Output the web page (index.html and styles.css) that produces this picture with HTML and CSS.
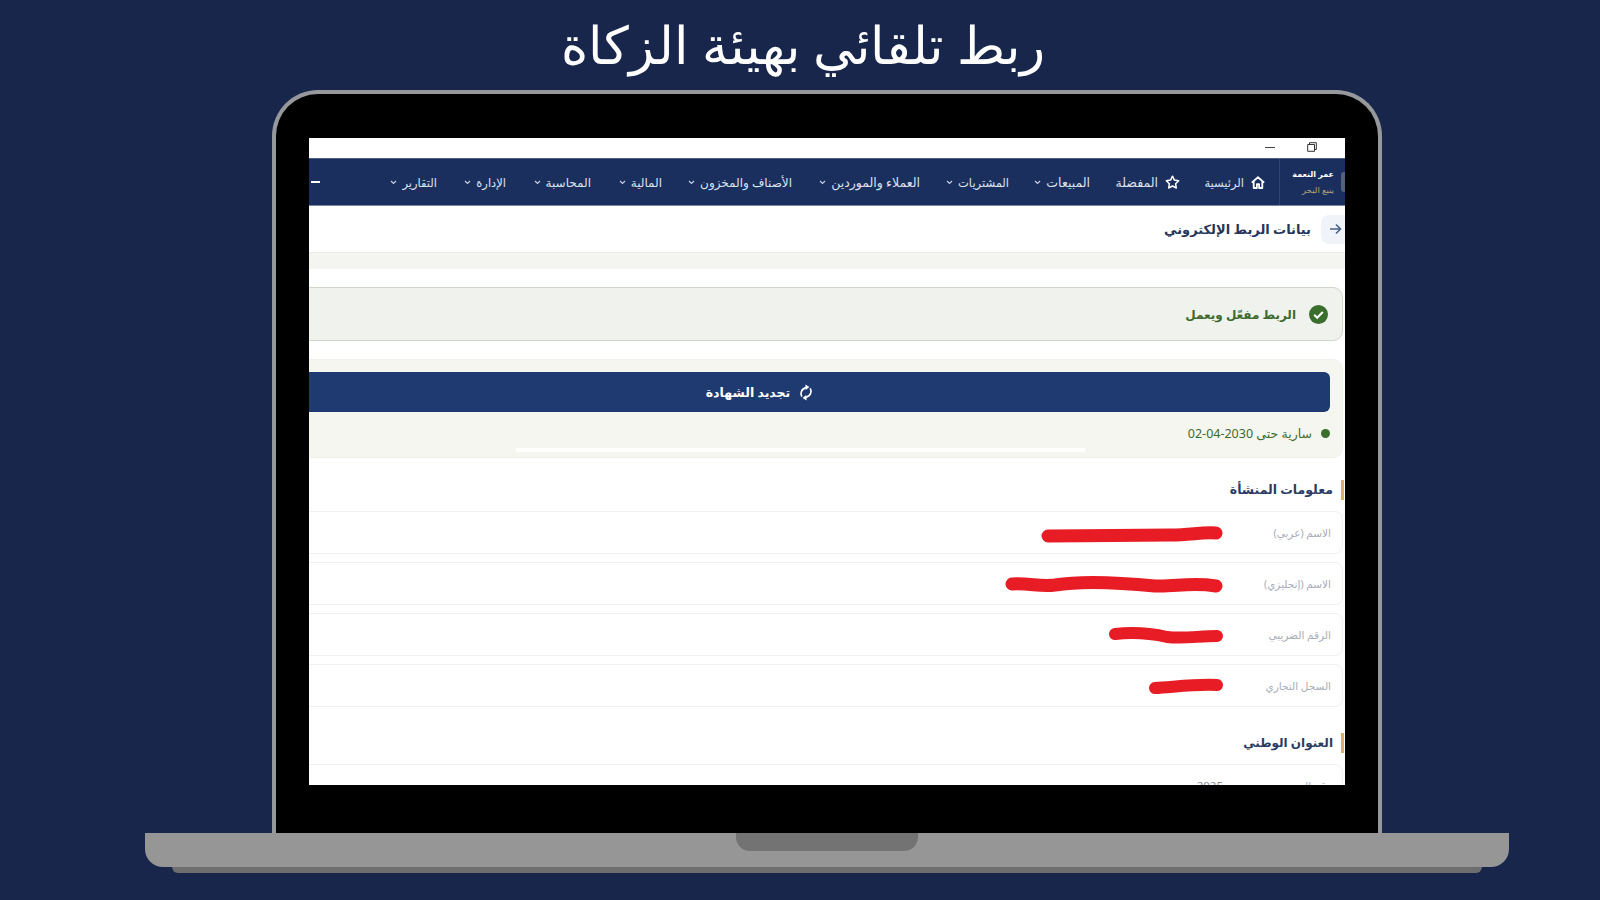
FILE: index.html
```html
<!DOCTYPE html>
<html lang="ar" dir="rtl">
<head>
<meta charset="utf-8">
<title>ربط تلقائي بهيئة الزكاة</title>
<link rel="stylesheet" href="styles.css">
</head>
<body>
<h1 class="headline">ربط تلقائي بهيئة الزكاة</h1>
<div class="laptop">
  <div class="lid">
    <div class="screen">
      <div class="winbar">
        <svg class="win-restore" width="10" height="10" viewBox="0 0 10 10"><path d="M2.5 2.5V.7h6.8v6.8H7.5M.7 2.5h6.8v6.8H.7z" fill="none" stroke="#333" stroke-width="1"/></svg>
        <span class="win-min"></span>
      </div>
      <nav class="nav">
        <div class="brand">
          <span class="brand-pill"></span>
          <div class="brand-text"><b>عمر النعمة</b><small>ينبع البحر</small></div>
        </div>
        <div class="menu">
          <a class="item home"><svg width="14" height="13" viewBox="0 0 14 13"><path d="M.8 6.6 7 1.2l6.2 5.4M2.7 5.6v6.4h3.2V8.2h2.2V12h3.2V5.6" fill="none" stroke="#fff" stroke-width="1.8" stroke-linejoin="round"/></svg>الرئيسية</a>
          <a class="item fav"><svg width="15" height="14" viewBox="0 0 15 14"><path d="m7.5 1.2 1.9 3.9 4.3.6-3.1 3 .7 4.3-3.8-2-3.8 2 .7-4.3-3.1-3 4.3-.6z" fill="none" stroke="#fff" stroke-width="1.5" stroke-linejoin="round"/></svg>المفضلة</a>
          <a class="item sales">المبيعات<svg class="chev" width="7" height="5" viewBox="0 0 7 5"><path d="m1 1 2.5 2.5L6 1" fill="none" stroke="#c9d1e2" stroke-width="1.1"/></svg></a>
          <a class="item buy">المشتريات<svg class="chev" width="7" height="5" viewBox="0 0 7 5"><path d="m1 1 2.5 2.5L6 1" fill="none" stroke="#c9d1e2" stroke-width="1.1"/></svg></a>
          <a class="item cust">العملاء والموردين<svg class="chev" width="7" height="5" viewBox="0 0 7 5"><path d="m1 1 2.5 2.5L6 1" fill="none" stroke="#c9d1e2" stroke-width="1.1"/></svg></a>
          <a class="item stock">الأصناف والمخزون<svg class="chev" width="7" height="5" viewBox="0 0 7 5"><path d="m1 1 2.5 2.5L6 1" fill="none" stroke="#c9d1e2" stroke-width="1.1"/></svg></a>
          <a class="item fin">المالية<svg class="chev" width="7" height="5" viewBox="0 0 7 5"><path d="m1 1 2.5 2.5L6 1" fill="none" stroke="#c9d1e2" stroke-width="1.1"/></svg></a>
          <a class="item acc">المحاسبة<svg class="chev" width="7" height="5" viewBox="0 0 7 5"><path d="m1 1 2.5 2.5L6 1" fill="none" stroke="#c9d1e2" stroke-width="1.1"/></svg></a>
          <a class="item admin">الإدارة<svg class="chev" width="7" height="5" viewBox="0 0 7 5"><path d="m1 1 2.5 2.5L6 1" fill="none" stroke="#c9d1e2" stroke-width="1.1"/></svg></a>
          <a class="item rep">التقارير<svg class="chev" width="7" height="5" viewBox="0 0 7 5"><path d="m1 1 2.5 2.5L6 1" fill="none" stroke="#c9d1e2" stroke-width="1.1"/></svg></a>
        </div>
        <span class="nav-dash"></span>
      </nav>
      <header class="pagehead">
        <span class="back"><svg width="13" height="12" viewBox="0 0 13 12"><path d="M1 6h10.5M7 1.5 11.5 6 7 10.5" fill="none" stroke="#4a6288" stroke-width="1.6"/></svg></span>
        <h2>بيانات الربط الإلكتروني</h2>
      </header>
      <div class="strip"></div>
      <main class="content">
        <section class="alert">
          <svg width="19" height="19" viewBox="0 0 19 19"><circle cx="9.5" cy="9.5" r="9.5" fill="#3a6e2c"/><path d="m5.2 9.8 3 3 5.6-5.8" fill="none" stroke="#fff" stroke-width="2"/></svg>
          <span>الربط مفعّل ويعمل</span>
        </section>
        <section class="card">
          <button class="renew"><svg width="14" height="17" viewBox="0 0 14 17"><path d="M2.8 12.6C1 9.6 2 5 7.4 3.4M11.2 4.4C13 7.4 12 12 6.6 13.6" fill="none" stroke="#fff" stroke-width="1.7"/><path d="M6.4.4 10.4 3 6.8 6zM7.6 16.6 3.6 14 7.2 11z" fill="#fff"/></svg>تجديد الشهادة</button>
          <div class="status"><i class="dot"></i><span>سارية حتى <bdi class="date">02-04-2030</bdi></span></div>
          <div class="bar"></div>
        </section>
        <h3 class="section">معلومات المنشأة</h3>
        <div class="row"><span class="label">الاسم (عربي)</span>
          <svg class="scrib" width="182" height="20" viewBox="0 0 182 20"><path d="M7 12C50 12 100 11 130 11 150 11 160 8 175 9" fill="none" stroke="#e81c24" stroke-width="13" stroke-linecap="round"/></svg></div>
        <div class="row"><span class="label">الاسم (إنجليزي)</span>
          <svg class="scrib" width="218" height="20" viewBox="0 0 218 20"><path d="M7 9C25 8 35 12 50 10 80 5 120 8 150 11 170 12 185 7 211 11" fill="none" stroke="#e81c24" stroke-width="13" stroke-linecap="round"/></svg></div>
        <div class="row"><span class="label">الرقم الضريبي</span>
          <svg class="scrib" width="114" height="20" viewBox="0 0 114 20"><path d="M6 8C25 6 40 7 58 11 75 13 90 10 108 10" fill="none" stroke="#e81c24" stroke-width="12" stroke-linecap="round"/></svg></div>
        <div class="row"><span class="label">السجل التجاري</span>
          <svg class="scrib" width="74" height="20" viewBox="0 0 74 20"><path d="M6 11C25 10 45 7 68 8" fill="none" stroke="#e81c24" stroke-width="12" stroke-linecap="round"/></svg></div>
        <h3 class="section second">العنوان الوطني</h3>
        <div class="row"><span class="label">رقم المبنى</span><span class="value">2025</span></div>
      </main>
    </div>
  </div>
  <div class="base"><span class="notch"></span></div>
  <div class="foot"></div>
</div>
</body>
</html>
```
FILE: styles.css
```css
* { box-sizing: border-box; }
html, body { margin: 0; height: 900px; overflow: hidden; }
body {
  background: #17264a;
  font-family: "Noto Sans", "DejaVu Sans", sans-serif;
  display: flex;
  flex-direction: column;
  align-items: center;
}
.headline {
  margin: 0 0 0 6px;
  height: 90px;
  line-height: 88px;
  font-size: 52px;
  font-weight: 200;
  color: #fff;
}
.laptop { display: flex; flex-direction: column; align-items: center; margin-left: 54px; }
.lid {
  width: 1110px;
  height: 743px;
  background: #000;
  border: 4px solid #97989b;
  border-bottom: 0;
  border-radius: 46px 46px 0 0;
  padding: 44px 33px 48px;
}
.screen { width: 1036px; height: 647px; background: #fff; overflow: hidden; }
.base {
  width: 1364px;
  height: 34px;
  background: #969696;
  border-radius: 0 0 18px 18px;
  display: flex;
  justify-content: center;
}
.notch { width: 182px; height: 18px; background: #737373; border-radius: 0 0 14px 14px; }
.foot { width: 1310px; height: 6px; background: #6e6e6e; border-radius: 0 0 8px 8px; }

.winbar { height: 20px; display: flex; align-items: center; padding-right: 28px; gap: 32px; }
.win-restore { margin-bottom: 3px; }
.win-min { width: 10px; height: 1px; background: #444; margin-bottom: 1px; }

.nav {
  height: 48px;
  background: #1a2f5e;
  border-top: 1px solid #4d6088;
  border-bottom: 1px solid #7886a3;
  display: flex;
  align-items: center;
  color: #fff;
}
.brand {
  width: 66px;
  height: 100%;
  border-left: 1px solid #2f4474;
  display: flex;
  align-items: center;
  gap: 7px;
  flex: none;
}
.brand-pill { width: 4px; height: 20px; background: #55607a; border-radius: 3px 0 0 3px; flex: none; }
.brand-text { display: flex; flex-direction: column; gap: 6px; font-size: 8px; line-height: 10px; }
.brand-text b { font-size: 8px; }
.brand-text small { font-size: 8.5px; color: #b2a57c; }
.menu { display: flex; align-items: center; flex: 1; padding-right: 14px; }
.item { display: flex; align-items: center; gap: 5px; font-size: 11.5px; color: #dde2ee; white-space: nowrap; flex: none; }
.home { width: 85px; gap: 7px; }
.fav { width: 90px; gap: 7px; font-size: 12.5px; }
.sales { width: 81px; font-size: 12.5px; }
.buy { width: 89px; }
.cust { width: 128px; font-size: 12.5px; }
.stock { width: 130px; font-size: 12px; }
.fin { width: 71px; font-size: 12px; }
.acc { width: 85px; font-size: 12px; }
.admin { width: 69px; }
.rep { width: 50px; }
.chev { flex: none; }
.nav-dash { width: 9px; height: 2px; background: #fff; margin-left: 2px; flex: none; }

.pagehead {
  height: 47px;
  border-bottom: 1px solid #ececea;
  display: flex;
  align-items: center;
  gap: 10px;
}
.back {
  width: 24px;
  height: 29px;
  background: #f0f3f8;
  border-radius: 8px 0 0 8px;
  display: flex;
  align-items: center;
  justify-content: center;
  padding-left: 4px;
}
.pagehead h2 { margin: 0; font-size: 13px; font-weight: 600; color: #26365a; }
.strip { height: 16px; background: #f4f4f0; }

.content { width: 1160px; padding: 18px 2px 0 0; }
.alert {
  height: 54px;
  background: #f0f2ee;
  border: 1px solid #cfd6cb;
  border-radius: 10px;
  display: flex;
  align-items: center;
  gap: 13px;
  padding-right: 14px;
  font-size: 12px;
  font-weight: 600;
  color: #3d6b2e;
}
.card {
  margin-top: 18px;
  height: 99px;
  background: #f6f6f1;
  border: 1px solid #f0f0ea;
  border-radius: 10px;
  padding: 12px 12px 0;
}
.renew {
  width: 100%;
  height: 40px;
  padding: 0 9px 0 0;
  background: #1f3a70;
  border: 0;
  border-radius: 6px;
  color: #fff;
  font: 600 12.5px "Noto Sans", "DejaVu Sans", sans-serif;
  display: flex;
  align-items: center;
  justify-content: center;
  gap: 9px;
}
.status { height: 26px; margin-top: 8px; display: flex; align-items: center; gap: 9px; font-size: 12.5px; color: #3d6b2e; }
.date { direction: ltr; unicode-bidi: isolate; }
.dot { width: 9px; height: 9px; border-radius: 50%; background: #3a6e2c; flex: none; }
.bar { width: 569px; height: 4px; margin: 2px 245px 0 0; background: #fff; }
.section {
  margin: 22px -1px 11px 0;
  height: 20px;
  line-height: 20px;
  padding-right: 8px;
  border-right: 3px solid #d4b463;
  font-size: 12.5px;
  font-weight: 600;
  color: #2a3c66;
}
.second { margin-top: 26px; font-size: 12px; }
.row {
  height: 43px;
  margin-bottom: 8px;
  border: 1px solid #eef0f3;
  border-radius: 8px;
  display: flex;
  align-items: center;
  padding-right: 11px;
}
.label { width: 108px; flex: none; font-size: 10.5px; color: #a7acb8; }
.value { font-size: 11.5px; color: #8a8d96; }
.scrib { flex: none; margin-top: 3px; }
```
